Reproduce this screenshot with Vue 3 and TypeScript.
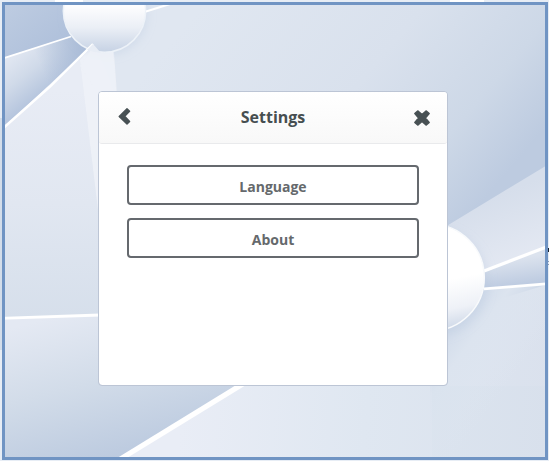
<script setup lang="ts">
import { ref } from 'vue'

interface MenuItem {
  id: string
  label: string
}

const title = ref<string>('Settings')
const items: MenuItem[] = [
  { id: 'language', label: 'Language' },
  { id: 'about', label: 'About' },
]
</script>

<template>
  <main class="screen">
    <svg class="wallpaper" viewBox="0 0 549 461" aria-hidden="true">
      <defs>
        <linearGradient id="upper" gradientUnits="userSpaceOnUse" x1="190" y1="20" x2="450" y2="240">
          <stop offset="0" stop-color="#e0e7f1" />
          <stop offset=".5" stop-color="#d9e1ed" />
          <stop offset=".8" stop-color="#cdd8e7" />
          <stop offset="1" stop-color="#bdcbe0" />
        </linearGradient>
        <linearGradient id="corner" x1="0" y1="0" x2="1" y2="1">
          <stop offset="0" stop-color="#bfcde2" />
          <stop offset="1" stop-color="#abbdd9" />
        </linearGradient>
        <linearGradient id="fan" gradientUnits="userSpaceOnUse" x1="20" y1="50" x2="51" y2="89">
          <stop offset="0" stop-color="#e0e6f1" />
          <stop offset=".45" stop-color="#d0dae9" />
          <stop offset="1" stop-color="#b4c4dd" />
        </linearGradient>
        <linearGradient id="fanShade" gradientUnits="userSpaceOnUse" x1="40" y1="65" x2="88" y2="45">
          <stop offset="0" stop-color="#a8bad6" stop-opacity="0" />
          <stop offset="1" stop-color="#a8bad6" />
        </linearGradient>
        <linearGradient id="left" gradientUnits="userSpaceOnUse" x1="0" y1="90" x2="0" y2="318">
          <stop offset="0" stop-color="#e8ecf5" />
          <stop offset=".5" stop-color="#e1e7f1" />
          <stop offset="1" stop-color="#d6dfeb" />
        </linearGradient>
        <linearGradient id="lower" gradientUnits="userSpaceOnUse" x1="50" y1="318" x2="90" y2="475">
          <stop offset="0" stop-color="#e4e9f3" />
          <stop offset=".45" stop-color="#d2dce9" />
          <stop offset="1" stop-color="#b9c8de" />
        </linearGradient>
        <linearGradient id="bottom" gradientUnits="userSpaceOnUse" x1="180" y1="420" x2="549" y2="450">
          <stop offset="0" stop-color="#e9edf6" />
          <stop offset=".5" stop-color="#dfe7f1" />
          <stop offset="1" stop-color="#dae1ed" />
        </linearGradient>
        <linearGradient id="rightLower" gradientUnits="userSpaceOnUse" x1="455" y1="300" x2="530" y2="355">
          <stop offset="0" stop-color="#cdd8e8" />
          <stop offset=".4" stop-color="#dce4ef" />
          <stop offset="1" stop-color="#dfe6f1" stop-opacity="0" />
        </linearGradient>
        <linearGradient id="band" gradientUnits="userSpaceOnUse" x1="485" y1="200" x2="510" y2="262">
          <stop offset="0" stop-color="#d6deeb" />
          <stop offset="1" stop-color="#e3e8f2" />
        </linearGradient>
        <linearGradient id="spoke" gradientUnits="userSpaceOnUse" x1="515" y1="258" x2="519" y2="286">
          <stop offset="0" stop-color="#dce3ee" />
          <stop offset="1" stop-color="#bccae0" />
        </linearGradient>
        <linearGradient id="ballTop" x1="0" y1="0" x2="0" y2="1">
          <stop offset=".44" stop-color="#fdfdfe" />
          <stop offset=".7" stop-color="#ebeff6" />
          <stop offset="1" stop-color="#c6d2e4" />
        </linearGradient>
        <linearGradient id="ballRight" x1=".4" y1="0" x2=".6" y2="1">
          <stop offset=".55" stop-color="#ffffff" />
          <stop offset=".82" stop-color="#eef1f7" />
          <stop offset="1" stop-color="#cfd9e8" />
        </linearGradient>
        <filter id="soft" x="-20%" y="-20%" width="140%" height="140%">
          <feGaussianBlur stdDeviation="5" />
        </filter>
        <filter id="edge" x="-10%" y="-10%" width="120%" height="120%">
          <feGaussianBlur stdDeviation=".45" />
        </filter>
      </defs>

      <rect width="549" height="461" fill="url(#upper)" />
      <path d="M0 0H75V36L0 59Z" fill="url(#corner)" />
      <path d="M0 59L75 35L98 44L0 131Z" fill="url(#fan)" />
      <path d="M0 59L75 35L98 44L0 131Z" fill="url(#fanShade)" />
      <path d="M0 131L95 42L120 110V320H0Z" fill="url(#left)" />
      <path d="M80 60L94 45L114 52L117 95L98 210Z" fill="#f0f3f8" fill-opacity=".75" />
      <path d="M0 318L100 315L260 380L118 461H0Z" fill="url(#lower)" />
      <path d="M120 461L242 386L430 320L549 284V461Z" fill="url(#bottom)" />
      <path d="M430 280L549 284V461H430Z" fill="url(#rightLower)" />
      <path d="M432 386H549V461H432Z" fill="#d1dbe9" fill-opacity=".15" />
      <path d="M440 230L549 164V247L484 271Z" fill="url(#band)" />
      <path d="M483 270L549 246V284L483 289Z" fill="url(#spoke)" />
      <circle cx="434" cy="282" r="54" fill="#afc0d9" fill-opacity=".3" filter="url(#soft)" />
      <circle cx="107" cy="15" r="40" fill="#afc0d9" fill-opacity=".3" filter="url(#soft)" />
      <path d="M80 66L95 44L113 48L116 91H96Z" fill="#edf1f7" fill-opacity=".9" />

      <g fill="none" stroke="#fff" filter="url(#edge)">
        <circle cx="104.5" cy="11" r="41.2" fill="url(#ballTop)" stroke="#edf2f8" stroke-width="1.5" />
        <path d="M146 11.5L170 4" stroke-width="2" />
        <path d="M0 59.4L71 36.5" stroke-width="1.8" />
        <path d="M0 131L50 86.5L93 44" stroke-width="2.4" />
        <path d="M0 318.4L100 315" stroke-width="2.8" />
        <path d="M114 463L246 382" stroke-width="5" />
        <path d="M484 271L549 246" stroke-width="3.2" />
        <path d="M484 288.8L549 283.7" stroke-width="2.7" />
        <circle cx="431" cy="277.5" r="53.3" fill="url(#ballRight)" stroke="#f8fafc" stroke-width="1.5" />
      </g>
      <path d="M87 50L93 44L101 53L94 52Z" fill="#e8edf5" />

      <path
        d="M0 0H549V461H0ZM3 3V459H547V3Z"
        fill="#e7edf5"
        fill-rule="evenodd"
      />
      <path d="M55 0H83V2H55ZM450 0H484V2H450Z" fill="#fff" />
      <path d="M0 118H2V350H0Z" fill="#d3ddea" />
      <path d="M548 248h1v4h-1Z" fill="#17202c" />
      <path d="M548 261h1v1h-1ZM548 264h1v1h-1Z" fill="#8798b5" />
      <rect x="3.5" y="3.5" width="543" height="455" fill="none" stroke="#7094c3" stroke-width="3" />
    </svg>

    <section class="card">
      <header class="bar">
        <button class="icon" type="button" aria-label="Back">
          <svg class="back" width="12" height="17" viewBox="0 0 12 17">
            <path d="M8 .8L10.6 3.2L5.7 8.2L10.6 13.4L8 16.1L.2 8.4Z" />
          </svg>
        </button>
        <h1>{{ title }}</h1>
        <button class="icon" type="button" aria-label="Close">
          <svg class="close" width="16" height="16" viewBox="0 0 16 16">
            <path d="M3.7 .9L8 4.6L12.3 .9L15.2 3.6L11.4 8L15.2 12.4L12.3 15.1L8 11.4L3.7 15.1L.8 12.4L4.6 8L.8 3.6Z" />
          </svg>
        </button>
      </header>
      <nav class="menu">
        <button v-for="item in items" :key="item.id" class="entry" type="button">{{ item.label }}</button>
      </nav>
    </section>
  </main>
</template>

<style>
body {
  margin: 0;
  overflow: hidden;
}
</style>

<style scoped>
.screen {
  position: relative;
  box-sizing: border-box;
  width: 549px;
  height: 461px;
  padding: 91px 101px 0 98px;
  font-family: "Open Sans", "Noto Sans", sans-serif;
}

.wallpaper {
  position: absolute;
  inset: 0;
  width: 549px;
  height: 461px;
}

.card {
  position: relative;
  box-sizing: border-box;
  height: 295px;
  border: 1px solid #bcc5d5;
  border-radius: 4px;
  background: #fff;
  background-clip: padding-box;
}

.bar {
  display: flex;
  align-items: center;
  justify-content: space-between;
  box-sizing: border-box;
  height: 52px;
  padding: 0 17px 0 20px;
  border-bottom: 1px solid #e9eaec;
  border-radius: 3px;
  background: linear-gradient(#fff, #f8f8f8);
}

h1 {
  margin: 0 0 1px;
  padding-left: 1px;
  color: #464e50;
  font-size: 16px;
  font-weight: 700;
  line-height: 24px;
}

.icon {
  display: flex;
  padding: 0;
  border: 0;
  background: none;
}

.icon path {
  fill: #485154;
  stroke: #485154;
  stroke-width: 1.4;
  stroke-linejoin: round;
}

.icon svg {
  overflow: visible;
}

.back {
  margin-bottom: 3px;
}

.menu {
  display: flex;
  flex-direction: column;
  gap: 13px;
  padding: 21px 28px;
}

.entry {
  box-sizing: border-box;
  height: 40px;
  padding: 4px 0 0;
  border: 2px solid #65696e;
  border-radius: 4px;
  background: #fff;
  color: #65696c;
  font: 700 14px/20px "Open Sans", "Noto Sans", sans-serif;
}
</style>
